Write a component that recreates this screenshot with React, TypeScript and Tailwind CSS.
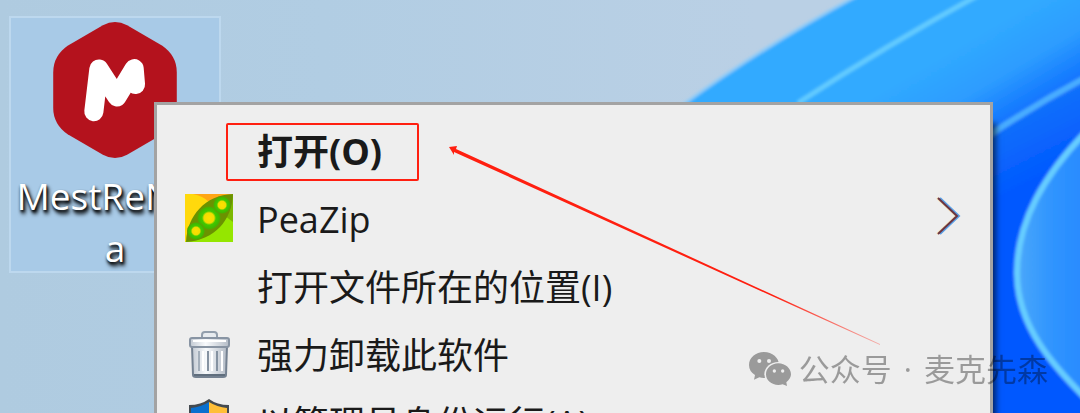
import React from 'react';
import clsx from 'clsx';

interface MenuItem {
  label: string;
  icon?: React.ReactNode;
  isDefault?: boolean;
  hasSubmenu?: boolean;
}

function Wallpaper() {
  return (
    <svg
      className="absolute inset-0 w-full h-full"
      viewBox="0 0 1080 413"
      preserveAspectRatio="xMaxYMin slice"
      aria-hidden="true"
    >
      <defs>
        <linearGradient id="sky" x1="0" y1="0" x2="1" y2="0">
          <stop offset="0" stopColor="#afcbe0" />
          <stop offset="0.3" stopColor="#b1cde3" />
          <stop offset="0.7" stopColor="#bad0e5" />
        </linearGradient>
        <linearGradient id="petalMid" gradientUnits="userSpaceOnUse" x1="1000" y1="20" x2="1050" y2="105">
          <stop offset="0" stopColor="#30aaff" />
          <stop offset="0.5" stopColor="#2d9cff" />
          <stop offset="1" stopColor="#0a6cff" />
        </linearGradient>
        <linearGradient id="petalDeep" gradientUnits="userSpaceOnUse" x1="1010" y1="120" x2="1040" y2="180">
          <stop offset="0" stopColor="#1270fb" />
          <stop offset="1" stopColor="#0058ff" />
        </linearGradient>
        <linearGradient id="petalFront" x1="0" y1="0" x2="1" y2="0">
          <stop offset="0" stopColor="#4ba8fa" />
          <stop offset="0.4" stopColor="#3095fe" />
          <stop offset="1" stopColor="#2485ff" />
        </linearGradient>
        <filter id="soft" x="-10%" y="-10%" width="120%" height="120%">
          <feGaussianBlur stdDeviation="1.5" />
        </filter>
      </defs>
      <rect width="1080" height="413" fill="url(#sky)" />
      <g filter="url(#soft)">
        <path d="M864 -8 Q763 46 680 107 L620 160 L1100 440 L1100 -8 Z" fill="#30aaff" />
        <path d="M864 -8 Q763 46 680 107" fill="none" stroke="#8fcbf7" strokeWidth="3" />
        <path d="M984 -8 Q890 43 798 103 L760 160 L1100 440 L1100 -8 Z" fill="url(#petalMid)" />
        <path d="M984 -8 Q890 43 798 103" fill="none" stroke="#62cbff" strokeWidth="5" />
        <path d="M1100 70 Q1040 101 985 138 L960 440 L1100 440 Z" fill="url(#petalDeep)" />
        <path d="M1100 70 Q1040 101 985 138" fill="none" stroke="#48adff" strokeWidth="6" />
        <path
          d="M1100 118 C1040 175 1017 225 1017 273 C1017 325 1050 365 1100 412 Z"
          fill="url(#petalFront)"
        />
        <path
          d="M1100 118 C1040 175 1017 225 1017 273 C1017 325 1050 365 1100 412"
          fill="none"
          stroke="#66ceff"
          strokeWidth="6"
        />
      </g>
    </svg>
  );
}

function MestReNovaIcon() {
  return (
    <svg viewBox="0 0 368 405" className="w-[124px] h-[136px] shrink-0" aria-hidden="true">
      <path
        d="M148 10 Q184 -10 220 10 L325 71 Q368 101 368 150 L368 255 Q368 304 325 334 L220 395 Q184 415 148 395 L43 334 Q0 304 0 255 L0 150 Q0 101 43 71 Z"
        fill="#b4121d"
      />
      <path
        d="M121 267 L136 140 L190 223 L241 139 L245 186"
        fill="none"
        stroke="#fff"
        strokeWidth="57"
        strokeLinecap="round"
        strokeLinejoin="round"
      />
    </svg>
  );
}

function PeaZipIcon() {
  return (
    <svg viewBox="0 0 48 48" className="w-12 h-12" aria-hidden="true">
      <defs>
        <radialGradient id="pea">
          <stop offset="0" stopColor="#ffe000" />
          <stop offset="0.42" stopColor="#f2dc00" />
          <stop offset="0.58" stopColor="#42c800" />
          <stop offset="0.85" stopColor="#3fb800" />
          <stop offset="1" stopColor="#6b9200" />
        </radialGradient>
      </defs>
      <rect width="48" height="48" fill="#ffd90c" />
      <path d="M8 0 H48 L24 8 Q18 2 8 0 Z" fill="#ffa614" />
      <path d="M48 0 V48 H0 Z" fill="#95e600" />
      <path d="M48 0 V28 L40 22 Z" fill="#7cb800" />
      <path d="M1 48 C2 22 20 1 48 0 C47 26 30 46 1 48 Z" fill="#6b9200" />
      <circle cx="24" cy="24" r="12" fill="url(#pea)" />
      <circle cx="11" cy="37" r="9" fill="url(#pea)" />
      <circle cx="37" cy="11" r="9" fill="url(#pea)" />
    </svg>
  );
}

function TrashIcon() {
  return (
    <svg viewBox="0 0 48 48" className="w-12 h-12" aria-hidden="true">
      <defs>
        <linearGradient id="bin" x1="0" y1="0" x2="1" y2="0">
          <stop offset="0" stopColor="#c3cad3" />
          <stop offset="0.4" stopColor="#f8fafc" />
          <stop offset="1" stopColor="#b4bcc7" />
        </linearGradient>
      </defs>
      <path d="M17 8 V5 Q17 2 20 2 H29 Q32 2 32 5 V8" fill="#e7ebef" stroke="#929eac" strokeWidth="2" />
      <path d="M7 16 L8 45 Q8 47 11 47 H38 Q41 47 41 45 L42 16 Z" fill="url(#bin)" stroke="#748191" strokeWidth="2" />
      <path d="M14 21 V41" stroke="#a4afbb" strokeWidth="2" />
      <path d="M23 21 V41 M32 21 V41" stroke="#8592a1" strokeWidth="2" />
      <path d="M18 21 V41 M27 21 V41 M37 21 V41" stroke="#fff" strokeWidth="2" />
      <rect x="5" y="8" width="39" height="9" rx="2" fill="url(#bin)" stroke="#8894a3" strokeWidth="2" />
      <path d="M8 11 H41" stroke="#fff" strokeWidth="2" />
      <path d="M9 45 H40" stroke="#606e7d" strokeWidth="2" />
    </svg>
  );
}

function ShieldIcon() {
  return (
    <svg viewBox="0 0 48 48" className="w-12 h-12" aria-hidden="true">
      <path d="M4 7 Q16 7 24 1 Q32 7 44 7 V24 Q42 40 24 47 Q6 40 4 24 Z" fill="#444a50" />
      <path d="M6 10 Q16 9 24 4 V24 H6 Z" fill="#0a70cf" />
      <path d="M42 10 Q32 9 24 4 V24 H42 Z" fill="#ffbf38" />
      <path d="M6 24 H24 V44 Q8 38 6 24 Z" fill="#ffbf38" />
      <path d="M42 24 H24 V44 Q40 38 42 24 Z" fill="#0a70cf" />
    </svg>
  );
}

function SubmenuArrow() {
  return (
    <svg viewBox="0 0 28 44" className="w-7 h-11 mr-1" fill="none" strokeWidth="2" aria-hidden="true">
      <path d="M3 2 L22 20 L3 38" stroke="#f6dfae" />
      <path d="M6 2 L25 20 L6 38" stroke="#5aa0e6" />
      <path d="M4 2 L23 20 L4 38" stroke="#6b3442" />
    </svg>
  );
}

function WechatIcon() {
  return (
    <svg viewBox="0 0 126 102" className="w-[42px] h-[34px]" aria-hidden="true">
      <defs>
        <mask id="backBubble">
          <rect width="126" height="102" fill="#fff" />
          <ellipse cx="88" cy="67" rx="42" ry="37" fill="#000" />
          <circle cx="31" cy="27" r="6" fill="#000" />
          <circle cx="60" cy="27" r="6" fill="#000" />
        </mask>
        <mask id="frontBubble">
          <rect width="126" height="102" fill="#fff" />
          <circle cx="76" cy="57" r="5" fill="#000" />
          <circle cx="101" cy="57" r="5" fill="#000" />
        </mask>
      </defs>
      <path
        d="M45 0 C70 0 90 17 90 39 C90 61 70 78 45 78 Q37 78 31 76 L15 83 L18 69 Q0 58 0 39 C0 17 20 0 45 0 Z"
        mask="url(#backBubble)"
      />
      <path
        d="M88 34 C109 34 126 49 126 67 Q126 80 112 91 L114 102 L101 97 Q95 99 88 99 C67 99 51 85 51 67 C51 49 67 34 88 34 Z"
        mask="url(#frontBubble)"
      />
    </svg>
  );
}

const menuItems: MenuItem[] = [
  { label: '打开(O)', isDefault: true },
  { label: 'PeaZip', icon: <PeaZipIcon />, hasSubmenu: true },
  { label: '打开文件所在的位置(I)' },
  { label: '强力卸载此软件', icon: <TrashIcon /> },
  { label: '以管理员身份运行(A)', icon: <ShieldIcon /> },
];

function MenuRow({ label, icon, isDefault, hasSubmenu }: MenuItem) {
  return (
    <button
      type="button"
      role="menuitem"
      className="relative flex items-center w-full h-[68px] pl-7 pr-6 text-left hover:bg-white"
    >
      <span className="w-12 h-12 mr-6 shrink-0">{icon}</span>
      <span className={clsx('flex-1 pt-1 whitespace-nowrap', isDefault && 'font-bold')}>{label}</span>
      {hasSubmenu && <SubmenuArrow />}
      {isDefault && (
        <span className="absolute left-[69px] top-[7px] w-[193px] h-[58px] border-2 border-[#ff1f10] rounded-xs" />
      )}
    </button>
  );
}

export default function App() {
  return (
    <main className="relative h-screen overflow-hidden font-['Open_Sans','Noto_Sans_CJK_SC',sans-serif] text-4xl leading-[52px]">
      <Wallpaper />

      {/* Desktop shortcut */}
      <button
        type="button"
        className="absolute left-[9px] top-4 w-[212px] h-[257px] pt-1 flex flex-col items-center justify-start gap-3 bg-[#a8cae7] border-2 border-[#bdd8ee] text-white text-[37px] leading-[52px] text-shadow-[1px_2px_3px_#000,2px_4px_4px_#000]"
      >
        <MestReNovaIcon />
        <span>
          MestReNov
          <br />a
        </span>
      </button>

      {/* Context menu */}
      <div
        role="menu"
        className="absolute left-[154px] right-[87px] top-[102px] pt-[11px] pb-3 bg-[#eeeeee] border-3 border-[#a3a3a3] text-[#1a1a1a] shadow-[6px_18px_6px_-3px_rgba(0,0,0,0.6)]"
      >
        {menuItems.map((item) => (
          <MenuRow key={item.label} {...item} />
        ))}
      </div>

      {/* Pointer arrow */}
      <svg
        viewBox="0 0 432 200"
        className="absolute left-[448px] top-[145px] w-[432px] h-[200px] pointer-events-none"
        aria-hidden="true"
      >
        <defs>
          <linearGradient id="fade" x1="0" y1="0" x2="1" y2="0">
            <stop offset="0.75" stopColor="#ff1f10" />
            <stop offset="1" stopColor="#ff1f10" stopOpacity="0.3" />
          </linearGradient>
        </defs>
        <path d="M1 2 L9 1 L8 4 L432 199 L432 200 L6 7 L6 10 Z" fill="url(#fade)" />
      </svg>

      {/* Watermark */}
      <div className="absolute right-8 bottom-6 flex items-center gap-2 text-[31px] leading-10 opacity-35 text-black pointer-events-none">
        <WechatIcon />
        <span className="flex gap-3 whitespace-nowrap">
          <span>公众号</span>
          <span>·</span>
          <span>麦克先森</span>
        </span>
      </div>
    </main>
  );
}
